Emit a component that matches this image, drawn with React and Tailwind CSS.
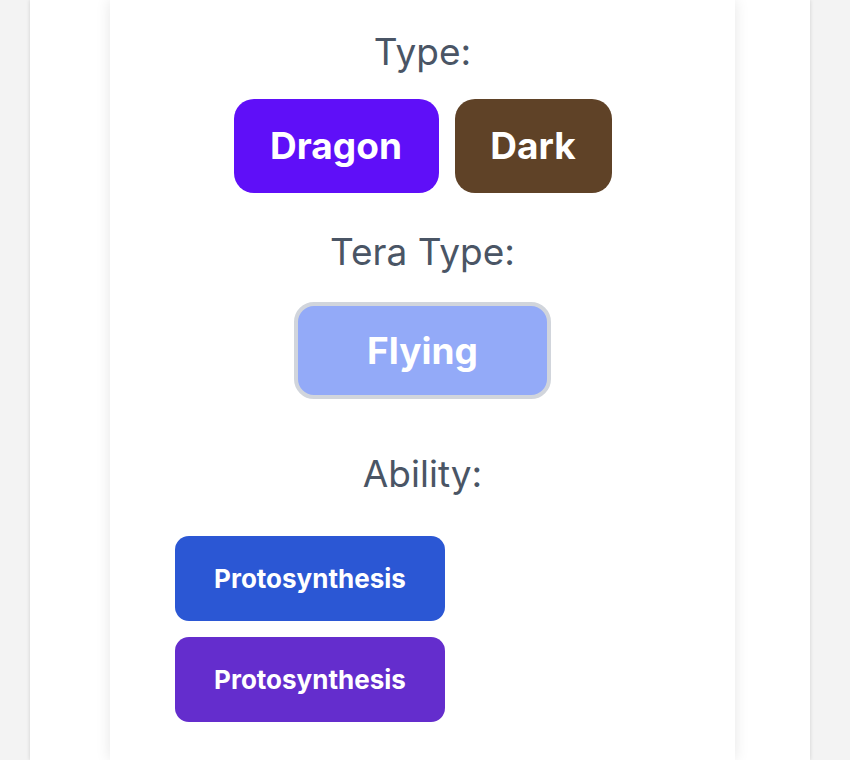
import React from 'react';

const types = [
  { name: 'Dragon', cls: 'w-[205px] bg-[#5f0ff8]' },
  { name: 'Dark', cls: 'w-[157px] bg-[#5f4227]' },
];

const abilities = [
  { name: 'Protosynthesis', cls: 'bg-[#2b57d4]' },
  { name: 'Protosynthesis', cls: 'bg-[#642dcd]' },
];

const App = () => {
  return (
    <div className="h-[760px] overflow-hidden bg-[#f3f3f3] font-['Inter',sans-serif]">
      <div className="ml-[30px] w-[780px] h-full bg-white shadow-[0_0_4px_rgba(0,0,0,0.15)]">
        <div className="ml-[80px] w-[625px] h-full bg-white shadow-[0_0_14px_rgba(0,0,0,0.1)] pt-[32px]">
          {/* Type */}
          <p className="text-center text-[37px] leading-10 text-gray-600">Type:</p>
          <div className="mt-[27px] flex justify-center gap-4">
            {types.map((t) => (
              <span
                key={t.name}
                className={`h-[94px] rounded-[20px] flex items-center justify-center text-white text-[37px] font-bold ${t.cls}`}
              >
                {t.name}
              </span>
            ))}
          </div>

          {/* Tera type */}
          <p className="mt-[39px] text-center text-[37px] leading-10 text-gray-600">Tera Type:</p>
          <div className="mt-[30px] flex justify-center">
            <span className="w-[257px] h-[97px] rounded-[20px] border-4 border-gray-300 bg-[#93aaf8] flex items-center justify-center text-white text-[37px] font-bold">
              Flying
            </span>
          </div>

          {/* Ability */}
          <p className="mt-[55px] text-center text-[37px] leading-10 text-gray-600">Ability:</p>
          <div className="mt-[42px] ml-[65px] flex flex-col gap-4">
            {abilities.map((a, i) => (
              <span
                key={i}
                className={`w-[270px] h-[85px] rounded-[14px] flex items-center justify-center text-white text-[26px] font-bold ${a.cls}`}
              >
                {a.name}
              </span>
            ))}
          </div>
        </div>
      </div>
    </div>
  );
};

export default App;
